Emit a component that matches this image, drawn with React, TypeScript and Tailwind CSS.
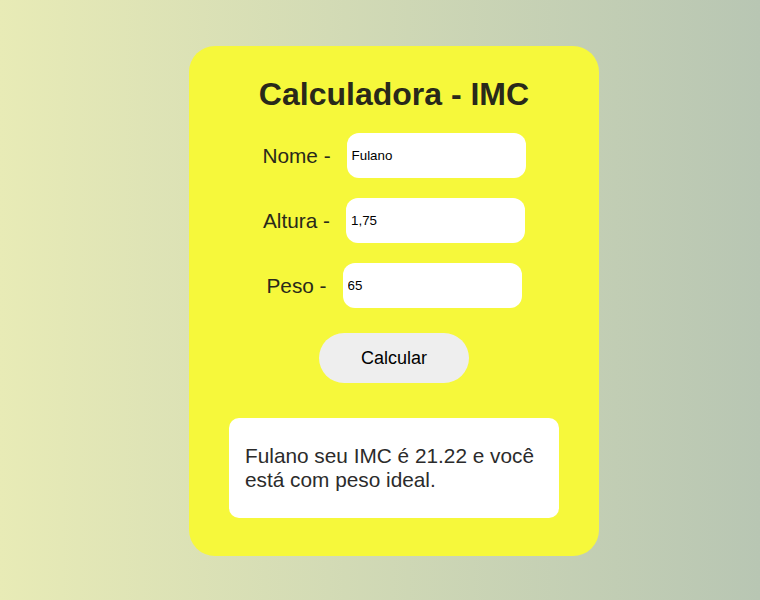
import React from 'react'

const campos = [
    { id: 'nome', label: 'Nome -', value: 'Fulano' },
    { id: 'altura', label: 'Altura -', value: '1,75' },
    { id: 'peso', label: 'Peso -', value: '65' },
]

function App() {
    return (
        <div
            className="min-h-[600px] w-full flex justify-center pt-[46px] pl-[28px] bg-gradient-to-r from-[#e8ebb6] to-[#b8c6b3]"
            style={{ fontFamily: '"Liberation Sans", Arial, sans-serif' }}
        >
            <div className="w-[410px] h-[510px] rounded-[26px] bg-[#f6f83b] flex flex-col items-center pt-[30px]">
                <h1 className="text-[32px] leading-[37px] font-bold text-[#29291a]">Calculadora - IMC</h1>

                <div className="flex flex-col gap-5 mt-5">
                    {
                        campos.map((campo) => (
                            <div className="flex items-center justify-center gap-4" key={campo.id}>
                                <label htmlFor={campo.id} className="text-[20.8px] text-[#29291a]">{campo.label}</label>
                                <input
                                    id={campo.id}
                                    defaultValue={campo.value}
                                    className="w-[179px] h-[45px] rounded-xl bg-white px-[5px] text-[13.33px] text-black outline-none"
                                />
                            </div>
                        ))
                    }
                </div>

                <button className="mt-[25px] w-[150px] h-[50px] rounded-full bg-[#eeeeee] text-[18px] text-black">
                    Calcular
                </button>

                <div className="mt-[35px] w-[330px] h-[100px] rounded-[10px] bg-white px-4 flex items-center">
                    <p className="text-[20.8px] leading-[24px] text-[#2b2b2b]">
                        Fulano seu IMC é 21.22 e você está com peso ideal.
                    </p>
                </div>
            </div>
        </div>
    )
}

export default App
